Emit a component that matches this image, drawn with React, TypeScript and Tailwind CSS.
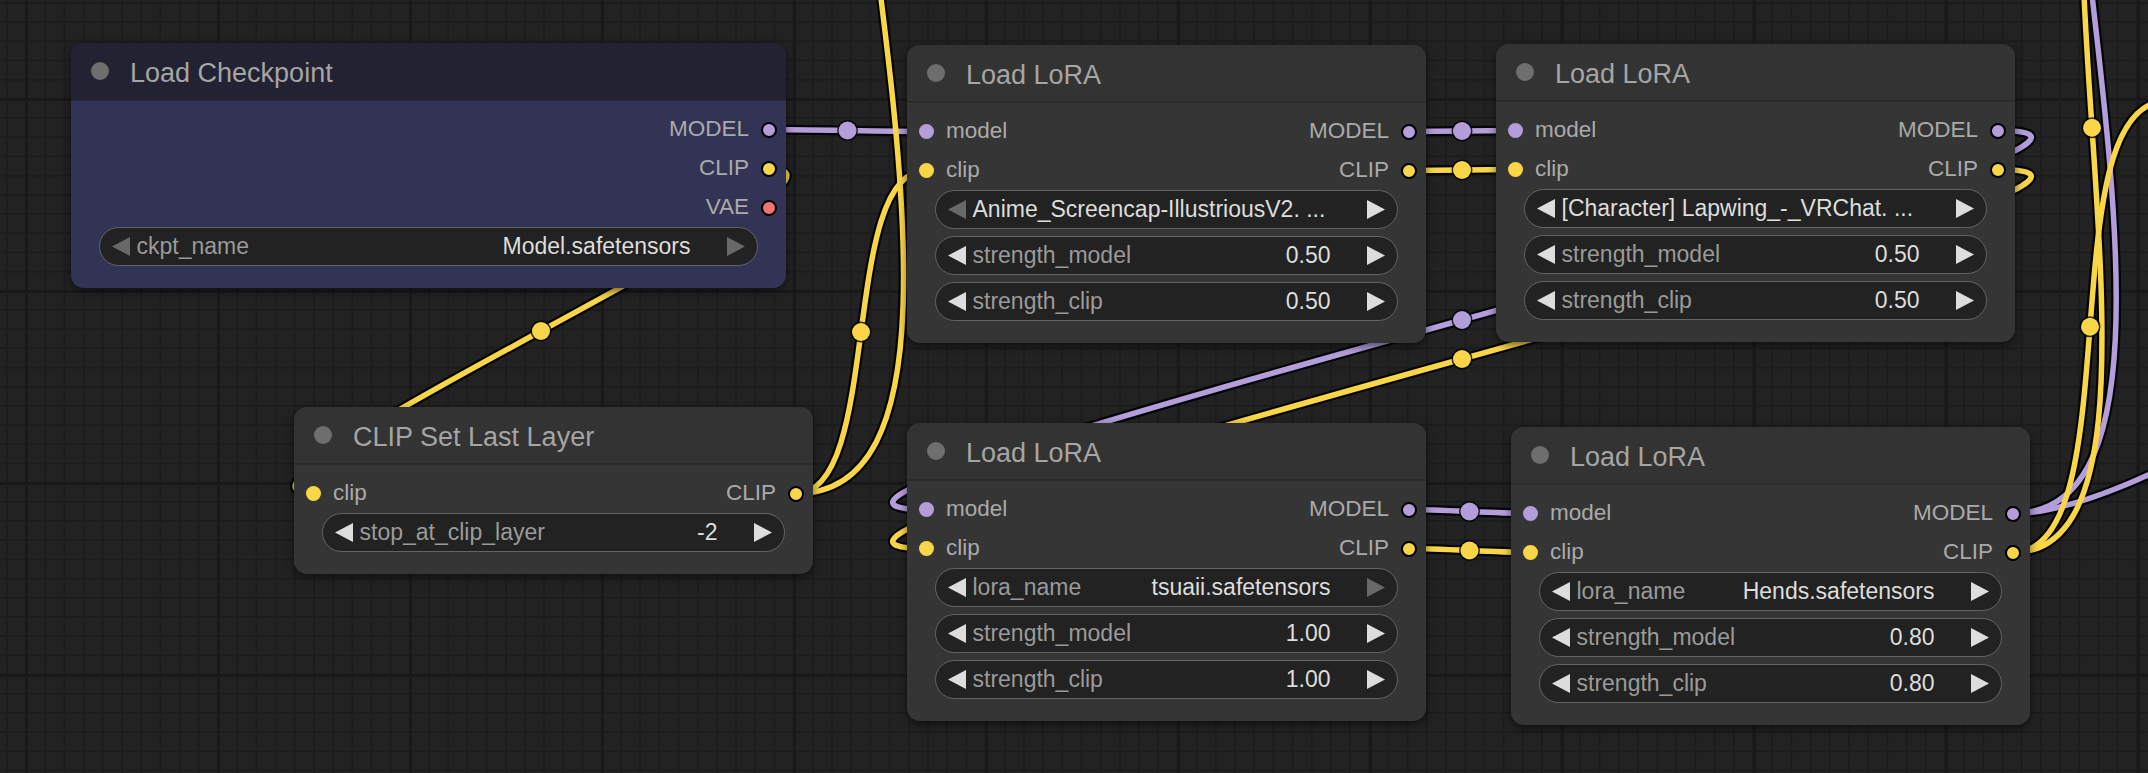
import React from "react";

type SlotType = "MODEL" | "CLIP" | "VAE";

interface Slot {
  name: string;
  type: SlotType;
}

interface Row {
  input?: Slot;
  output?: Slot;
}

interface Widget {
  label?: string;
  value: string;
  dimLeft?: boolean;
  dimRight?: boolean;
}

interface NodeDef {
  id: string;
  title: string;
  x: number;
  y: number;
  w: number;
  blue?: boolean;
  rows: Row[];
  widgets: Widget[];
}

// geometry of a node, in page pixels (canvas zoom ~1.9)
const TITLE_H = 58;
const ROW_TOP = 9;
const ROW_H = 39;

const wireColor: Record<SlotType, string> = {
  MODEL: "#b39ddb",
  CLIP: "#f9d648",
  VAE: "#f07373",
};

const dotClass: Record<SlotType, string> = {
  MODEL: "bg-[#b39ddb]",
  CLIP: "bg-[#f9d648]",
  VAE: "bg-[#ef7373]",
};

const nodes: NodeDef[] = [
  {
    id: "ckpt",
    title: "Load Checkpoint",
    x: 71,
    y: 43,
    w: 715,
    blue: true,
    rows: [
      { output: { name: "MODEL", type: "MODEL" } },
      { output: { name: "CLIP", type: "CLIP" } },
      { output: { name: "VAE", type: "VAE" } },
    ],
    widgets: [{ label: "ckpt_name", value: "Model.safetensors", dimLeft: true, dimRight: true }],
  },
  {
    id: "lora1",
    title: "Load LoRA",
    x: 907,
    y: 45,
    w: 519,
    rows: [
      { input: { name: "model", type: "MODEL" }, output: { name: "MODEL", type: "MODEL" } },
      { input: { name: "clip", type: "CLIP" }, output: { name: "CLIP", type: "CLIP" } },
    ],
    widgets: [
      { value: "Anime_Screencap-IllustriousV2. ...", dimLeft: true },
      { label: "strength_model", value: "0.50" },
      { label: "strength_clip", value: "0.50" },
    ],
  },
  {
    id: "lora2",
    title: "Load LoRA",
    x: 1496,
    y: 44,
    w: 519,
    rows: [
      { input: { name: "model", type: "MODEL" }, output: { name: "MODEL", type: "MODEL" } },
      { input: { name: "clip", type: "CLIP" }, output: { name: "CLIP", type: "CLIP" } },
    ],
    widgets: [
      { value: "[Character] Lapwing_-_VRChat. ..." },
      { label: "strength_model", value: "0.50" },
      { label: "strength_clip", value: "0.50" },
    ],
  },
  {
    id: "clipskip",
    title: "CLIP Set Last Layer",
    x: 294,
    y: 407,
    w: 519,
    rows: [{ input: { name: "clip", type: "CLIP" }, output: { name: "CLIP", type: "CLIP" } }],
    widgets: [{ label: "stop_at_clip_layer", value: "-2" }],
  },
  {
    id: "lora3",
    title: "Load LoRA",
    x: 907,
    y: 423,
    w: 519,
    rows: [
      { input: { name: "model", type: "MODEL" }, output: { name: "MODEL", type: "MODEL" } },
      { input: { name: "clip", type: "CLIP" }, output: { name: "CLIP", type: "CLIP" } },
    ],
    widgets: [
      { label: "lora_name", value: "tsuaii.safetensors", dimRight: true },
      { label: "strength_model", value: "1.00" },
      { label: "strength_clip", value: "1.00" },
    ],
  },
  {
    id: "lora4",
    title: "Load LoRA",
    x: 1511,
    y: 427,
    w: 519,
    rows: [
      { input: { name: "model", type: "MODEL" }, output: { name: "MODEL", type: "MODEL" } },
      { input: { name: "clip", type: "CLIP" }, output: { name: "CLIP", type: "CLIP" } },
    ],
    widgets: [
      { label: "lora_name", value: "Hends.safetensors" },
      { label: "strength_model", value: "0.80" },
      { label: "strength_clip", value: "0.80" },
    ],
  },
];

const byId = (id: string) => nodes.find(n => n.id === id)!;
const rowY = (n: NodeDef, i: number) => n.y + TITLE_H + ROW_TOP + ROW_H * i + ROW_H / 2;
const outPos = (id: string, i: number): [number, number] => {
  const n = byId(id);
  return [n.x + n.w - 17, rowY(n, i)];
};
const inPos = (id: string, i: number): [number, number] => {
  const n = byId(id);
  return [n.x + 19, rowY(n, i)];
};

type Pt = [number, number];

interface Link {
  from: Pt;
  to: Pt;
  type: SlotType;
}

// links to nodes that sit outside the visible area end at fixed points
const links: Link[] = [
  { from: outPos("ckpt", 0), to: inPos("lora1", 0), type: "MODEL" },
  { from: outPos("ckpt", 1), to: inPos("clipskip", 0), type: "CLIP" },
  { from: outPos("clipskip", 0), to: inPos("lora1", 1), type: "CLIP" },
  { from: outPos("clipskip", 0), to: [940, -700], type: "CLIP" },
  { from: outPos("lora1", 0), to: inPos("lora2", 0), type: "MODEL" },
  { from: outPos("lora1", 1), to: inPos("lora2", 1), type: "CLIP" },
  { from: outPos("lora2", 0), to: inPos("lora3", 0), type: "MODEL" },
  { from: outPos("lora2", 1), to: inPos("lora3", 1), type: "CLIP" },
  { from: outPos("lora3", 0), to: inPos("lora4", 0), type: "MODEL" },
  { from: outPos("lora3", 1), to: inPos("lora4", 1), type: "CLIP" },
  { from: outPos("lora4", 0), to: [2162, -600], type: "MODEL" },
  { from: outPos("lora4", 0), to: [2500, 330], type: "MODEL" },
  { from: outPos("lora4", 1), to: [2171, -297], type: "CLIP" },
  { from: outPos("lora4", 1), to: [2167, 101], type: "CLIP" },
];

const bezier = (a: Pt, b: Pt) => {
  const d = Math.hypot(b[0] - a[0], b[1] - a[1]) * 0.25;
  const p1: Pt = [a[0] + d, a[1]];
  const p2: Pt = [b[0] - d, b[1]];
  const path = `M${a[0]},${a[1]} C${p1[0]},${p1[1]} ${p2[0]},${p2[1]} ${b[0]},${b[1]}`;
  const mid: Pt = [
    0.125 * a[0] + 0.375 * p1[0] + 0.375 * p2[0] + 0.125 * b[0],
    0.125 * a[1] + 0.375 * p1[1] + 0.375 * p2[1] + 0.125 * b[1],
  ];
  return { path, mid };
};

const Wires: React.FC = () => (
  <svg className="absolute left-0 top-0" width={2148} height={773} viewBox="0 0 2148 773">
    {links.map((l, i) => {
      const { path } = bezier(l.from, l.to);
      return <path key={`b${i}`} d={path} fill="none" stroke="#000" strokeWidth={10} strokeOpacity={0.85} />;
    })}
    {links.map((l, i) => {
      const { path, mid } = bezier(l.from, l.to);
      return (
        <g key={`c${i}`}>
          <path d={path} fill="none" stroke={wireColor[l.type]} strokeWidth={5.5} />
          <circle cx={mid[0]} cy={mid[1]} r={10.5} fill="#000" fillOpacity={0.8} />
          <circle cx={mid[0]} cy={mid[1]} r={9} fill={wireColor[l.type]} />
        </g>
      );
    })}
  </svg>
);

const Arrow: React.FC<{ dir: "left" | "right"; dim?: boolean }> = ({ dir, dim }) => (
  <svg width={18} height={19} viewBox="0 0 18 19" className="shrink-0">
    <polygon points={dir === "left" ? "18,0 0,9.5 18,19" : "0,0 18,9.5 0,19"} fill={dim ? "#686868" : "#dddddd"} />
  </svg>
);

const WidgetRow: React.FC<{ widget: Widget }> = ({ widget }) => (
  <div className="flex h-[39px] items-center rounded-full border-[1.5px] border-[#646464] bg-[#222222] px-[12px] text-[23px] leading-none">
    <Arrow dir="left" dim={widget.dimLeft} />
    {widget.label ? (
      <>
        <span className="ml-[6.5px] flex-1 whitespace-nowrap text-[#9a9a9a]">{widget.label}</span>
        <span className="whitespace-nowrap text-[#dddddd]">{widget.value}</span>
      </>
    ) : (
      <span className="ml-[6.5px] flex-1 whitespace-nowrap text-[#dddddd]">{widget.value}</span>
    )}
    <span className="ml-[36.5px] flex">
      <Arrow dir="right" dim={widget.dimRight} />
    </span>
  </div>
);

const GraphNode: React.FC<{ node: NodeDef }> = ({ node }) => (
  <div
    className={`absolute overflow-hidden rounded-[13px] shadow-[0_3px_8px_rgba(0,0,0,0.55)] ${
      node.blue ? "bg-[#333355]" : "bg-[#353535]"
    }`}
    style={{ left: node.x, top: node.y, width: node.w }}
  >
    <div
      className={`flex h-[58px] items-center border-b-2 ${
        node.blue ? "border-[#28283c] bg-[#222233]" : "border-[#2c2c2c] bg-[#333333]"
      }`}
    >
      <span className="ml-[20px] h-[18px] w-[18px] rounded-full bg-[#6e6e6e]" />
      <span className="ml-[21px] pt-[5px] text-[27px] leading-none text-[#a5a5a5]">{node.title}</span>
    </div>
    <div className="pt-[9px]">
      {node.rows.map((row, i) => (
        <div key={i} className="flex h-[39px] items-center justify-between text-[22.5px] leading-none text-[#aaaaaa]">
          <div className="flex items-center pl-[11.5px]">
            {row.input && (
              <>
                <span className={`h-[15px] w-[15px] rounded-full ${dotClass[row.input.type]}`} />
                <span className="ml-[12.5px]">{row.input.name}</span>
              </>
            )}
          </div>
          <div className="flex items-center pr-[9px]">
            {row.output && (
              <>
                <span>{row.output.name}</span>
                <span className={`ml-[12px] h-[16px] w-[16px] rounded-full border-2 border-black ${dotClass[row.output.type]}`} />
              </>
            )}
          </div>
        </div>
      ))}
    </div>
    <div className="flex flex-col gap-[7px] px-[28px] pb-[22px]">
      {node.widgets.map((w, i) => (
        <WidgetRow key={i} widget={w} />
      ))}
    </div>
  </div>
);

export default function App() {
  return (
    <div className="relative h-[773px] w-full overflow-hidden bg-[#222222] font-['Liberation_Sans',Arial,sans-serif] [background-image:linear-gradient(to_right,#191919_3px,transparent_3px),linear-gradient(to_bottom,#191919_3px,transparent_3px),linear-gradient(to_right,#1c1c1c_2px,transparent_2px),linear-gradient(to_bottom,#1c1c1c_2px,transparent_2px)] [background-position:25px_98px,25px_98px,6px_2px,6px_2px] [background-size:192px_192px,192px_192px,19.2px_19.2px,19.2px_19.2px]">
      <Wires />
      {nodes.map(n => (
        <GraphNode key={n.id} node={n} />
      ))}
    </div>
  );
}
